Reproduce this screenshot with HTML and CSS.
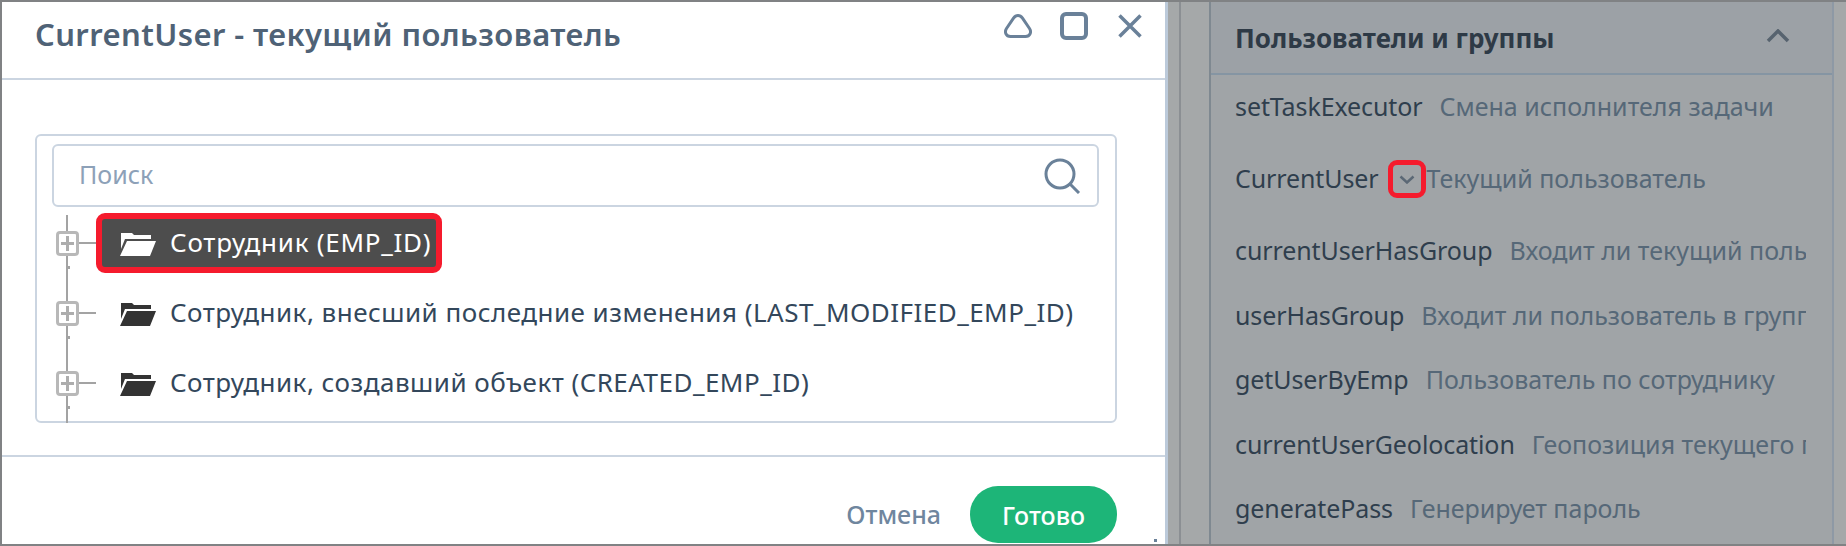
FILE: index.html
```html
<!DOCTYPE html>
<html lang="ru">
<head>
<meta charset="utf-8">
<title>CurrentUser</title>
<link rel="stylesheet" href="styles.css">
</head>
<body>
<div class="app">
  <section class="modal">
    <header class="modal-head">
      <h1 class="modal-title">CurrentUser - текущий пользователь</h1>
      <div class="win-icons">
        <svg class="win-icon" width="28" height="24" viewBox="0 0 28 24"><path d="M14 1.500 C16 1.500 17.500 2.800 18.500 4.200 L25.500 14.500 C27.800 18 26 22.500 21.500 22.500 H6.500 C2 22.500 .2 18 2.500 14.500 L9.500 4.200 C10.500 2.800 12 1.500 14 1.500Z" fill="none" stroke="#6a8199" stroke-width="3"/></svg>
        <svg class="win-icon" width="28" height="28" viewBox="0 0 28 28"><rect x="2" y="2" width="24" height="24" rx="4" fill="none" stroke="#6a8199" stroke-width="4"/></svg>
        <svg class="win-icon win-close" width="24" height="24" viewBox="0 0 24 24"><path d="M1.500 1.500 L22.500 22.500 M22.500 1.500 L1.500 22.500" fill="none" stroke="#6a8199" stroke-width="3.500"/></svg>
      </div>
    </header>
    <div class="modal-body">
      <div class="tree-box">
        <div class="search">
          <span class="search-ph">Поиск</span>
          <svg width="37" height="36" viewBox="0 0 37 36"><circle cx="16" cy="16" r="14" fill="none" stroke="#6a8199" stroke-width="3"/><path d="M26 26 L35 35" stroke="#6a8199" stroke-width="3"/></svg>
        </div>
        <div class="tree-list">
          <div class="tree-row">
            <span class="toggle"></span><span class="stub"></span>
            <div class="node node-active">
              <svg class="folder" width="36" height="25" viewBox="0 0 36 25"><path d="M1 2 H12 L14 4 H31 V8 H5 L1 18Z M7 10 H36 L30 25 H0Z"/></svg>
              <span class="node-label">Сотрудник (EMP_ID)</span>
            </div>
          </div>
          <div class="tree-row">
            <span class="toggle"></span><span class="stub"></span>
            <div class="node">
              <svg class="folder" width="36" height="25" viewBox="0 0 36 25"><path d="M1 2 H12 L14 4 H31 V8 H5 L1 18Z M7 10 H36 L30 25 H0Z"/></svg>
              <span class="node-label">Сотрудник, внесший последние изменения (LAST_MODIFIED_EMP_ID)</span>
            </div>
          </div>
          <div class="tree-row">
            <span class="toggle"></span><span class="stub"></span>
            <div class="node">
              <svg class="folder" width="36" height="25" viewBox="0 0 36 25"><path d="M1 2 H12 L14 4 H31 V8 H5 L1 18Z M7 10 H36 L30 25 H0Z"/></svg>
              <span class="node-label">Сотрудник, создавший объект (CREATED_EMP_ID)</span>
            </div>
          </div>
        </div>
      </div>
    </div>
    <footer class="modal-foot">
      <span class="btn-cancel">Отмена</span>
      <span class="btn-done">Готово</span>
      <span class="resize-dot"></span>
    </footer>
  </section>
  <div class="strip strip-a"></div>
  <div class="strip strip-b"></div>
  <aside class="panel">
    <div class="panel-head">
      <span class="panel-title">Пользователи и группы</span>
      <svg width="24" height="14" viewBox="0 0 24 14"><path d="M2 12 L12 2 L22 12" fill="none" stroke="#57636f" stroke-width="3.500"/></svg>
    </div>
    <ul class="fn-list">
      <li class="fn"><b>setTaskExecutor</b><span>Смена исполнителя задачи</span></li>
      <li class="fn fn-open"><b>CurrentUser</b><i class="fn-chevron"><svg width="16" height="9" viewBox="0 0 16 9"><path d="M1.500 1.500 L8 7.500 L14.500 1.500" fill="none" stroke="#5b6875" stroke-width="2.500"/></svg></i><span>Текущий пользователь</span></li>
      <li class="fn"><b>currentUserHasGroup</b><span>Входит ли текущий пользователь в группу</span></li>
      <li class="fn"><b>userHasGroup</b><span>Входит ли пользователь в группу</span></li>
      <li class="fn"><b>getUserByEmp</b><span>Пользователь по сотруднику</span></li>
      <li class="fn"><b>currentUserGeolocation</b><span>Геопозиция текущего пользователя</span></li>
      <li class="fn"><b>generatePass</b><span>Генерирует пароль</span></li>
    </ul>
  </aside>
  <div class="strip strip-c"></div>
</div>
</body>
</html>
```

FILE: styles.css
```css
* { box-sizing: border-box; }
html, body { margin: 0; padding: 0; }
body {
  width: 1846px;
  height: 546px;
  overflow: hidden;
  font-family: "Noto Sans", "Open Sans", sans-serif;
  background: #a3a6a8;
}
.app {
  display: flex;
  width: 1846px;
  height: 546px;
  border-top: 2px solid #808284;
  border-bottom: 2px solid #808284;
  border-left: 2px solid #808284;
}
.modal {
  width: 1166px;
  flex: none;
  display: flex;
  flex-direction: column;
  background: #fff;
  border-right: 3px solid #bccada;
}
.modal-head {
  height: 78px;
  flex: none;
  display: flex;
  justify-content: space-between;
  padding: 10px 23px 0 33px;
  border-bottom: 2px solid #cbd5e1;
}
.modal-title {
  margin: 0;
  font-size: 31px;
  line-height: 44px;
  font-weight: 600;
  letter-spacing: .4px;
  color: #4f6276;
}
.win-icons {
  display: flex;
  align-items: center;
  gap: 28px;
  height: 28px;
}
.win-close { margin-left: 2px; }
.modal-body {
  flex: 1;
  padding: 54px 48px 31px 33px;
  min-height: 0;
}
.tree-box {
  height: 289px;
  border: 2px solid #cbd5e1;
  border-radius: 6px;
  padding: 8px 16px 0 15px;
}
.search {
  height: 63px;
  display: flex;
  align-items: center;
  justify-content: space-between;
  border: 2px solid #cbd5e1;
  border-radius: 6px;
  padding: 0 16px 0 25px;
}
.search-ph {
  font-size: 25px;
  padding-bottom: 3px;
  color: #8da1b8;
}
.tree-list {
  position: relative;
  margin-top: 1px;
}
.tree-list::before {
  content: "";
  position: absolute;
  left: 14px;
  top: 7px;
  bottom: -5px;
  width: 2px;
  background: #a3a3a3;
}
.tree-row {
  position: relative;
  height: 70px;
  display: flex;
  align-items: center;
  padding-left: 4px;
}
.tree-row::after {
  content: "";
  position: absolute;
  left: 16px;
  bottom: 9px;
  width: 2px;
  height: 3px;
  background: #a3a3a3;
}
.toggle {
  position: relative;
  width: 23px;
  height: 25px;
  flex: none;
  background: #fff;
  border: 3px solid #b8b8b8;
  border-radius: 4px;
  z-index: 1;
}
.toggle::before,
.toggle::after {
  content: "";
  position: absolute;
  background: #adadad;
}
.toggle::before { left: 2px; right: 2px; top: 8px; height: 3px; }
.toggle::after { top: 2px; bottom: 2px; left: 7px; width: 3px; }
.stub {
  width: 17px;
  height: 2px;
  flex: none;
  background: #a3a3a3;
}
.node {
  display: flex;
  align-items: center;
  gap: 14px;
  height: 60px;
  padding: 0 5px 0 18px;
  border: 6px solid transparent;
  border-radius: 9px;
  font-size: 26px;
  letter-spacing: .48px;
  color: #33475b;
  white-space: nowrap;
}
.node-label { margin-bottom: 2px; }
.folder { fill: #333; flex: none; }
.node-active {
  background: #4d4d4d;
  border-color: #f51b2d;
  color: #fff;
  letter-spacing: .74px;
}
.node-active .folder { fill: #fff; }
.modal-foot {
  position: relative;
  height: 89px;
  flex: none;
  display: flex;
  align-items: center;
  justify-content: flex-end;
  gap: 29px;
  padding: 0 48px 0 0;
  border-top: 2px solid #cbd5e1;
}
.resize-dot {
  position: absolute;
  right: 8px;
  bottom: 2px;
  width: 3px;
  height: 3px;
  background: #6a8199;
}
.btn-cancel {
  font-size: 25px;
  font-weight: 500;
  color: #6f869e;
  margin-top: 27px;
}
.btn-done {
  width: 147px;
  height: 57px;
  margin-top: 28px;
  display: flex;
  align-items: center;
  justify-content: center;
  border-radius: 28px;
  background: #1db578;
  color: #fff;
  font-size: 25px;
  font-weight: 500;
}
.strip { flex: none; height: 100%; background: #a5a8a9; }
.strip-a { width: 13px; border-right: 2px solid #8b8f93; }
.strip-b { width: 30px; border-right: 2px solid #7f8991; }
.strip-c { width: 14px; border-left: 2px solid #8e99a5; }
.panel {
  flex: 1;
  min-width: 0;
  background: #a0a4a7;
}
.panel-head {
  height: 73px;
  display: flex;
  align-items: center;
  justify-content: space-between;
  padding: 0 42px 0 24px;
  background: #9ca1a6;
  border-bottom: 2px solid #8595a3;
}
.panel-title {
  font-size: 26px;
  font-weight: 700;
  color: #2e3a46;
}
.panel-head svg { margin-bottom: 4px; }
.fn-list {
  list-style: none;
  margin: 0;
  padding: 0 26px 0 24px;
}
.fn {
  display: flex;
  align-items: center;
  gap: 17px;
  height: 64.5px;
  padding-bottom: 2px;
  overflow: hidden;
  white-space: nowrap;
  font-size: 25px;
  color: #566878;
}
.fn-open { height: 79.5px; gap: 0; }
.fn b {
  font-weight: 400;
  letter-spacing: -.1px;
  color: #2f3e4d;
}
.fn-chevron {
  width: 38px;
  height: 38px;
  flex: none;
  margin: 2px 1px 0 9px;
  display: flex;
  align-items: center;
  justify-content: center;
  border: 5px solid #f51b2d;
  border-radius: 9px;
}
```
